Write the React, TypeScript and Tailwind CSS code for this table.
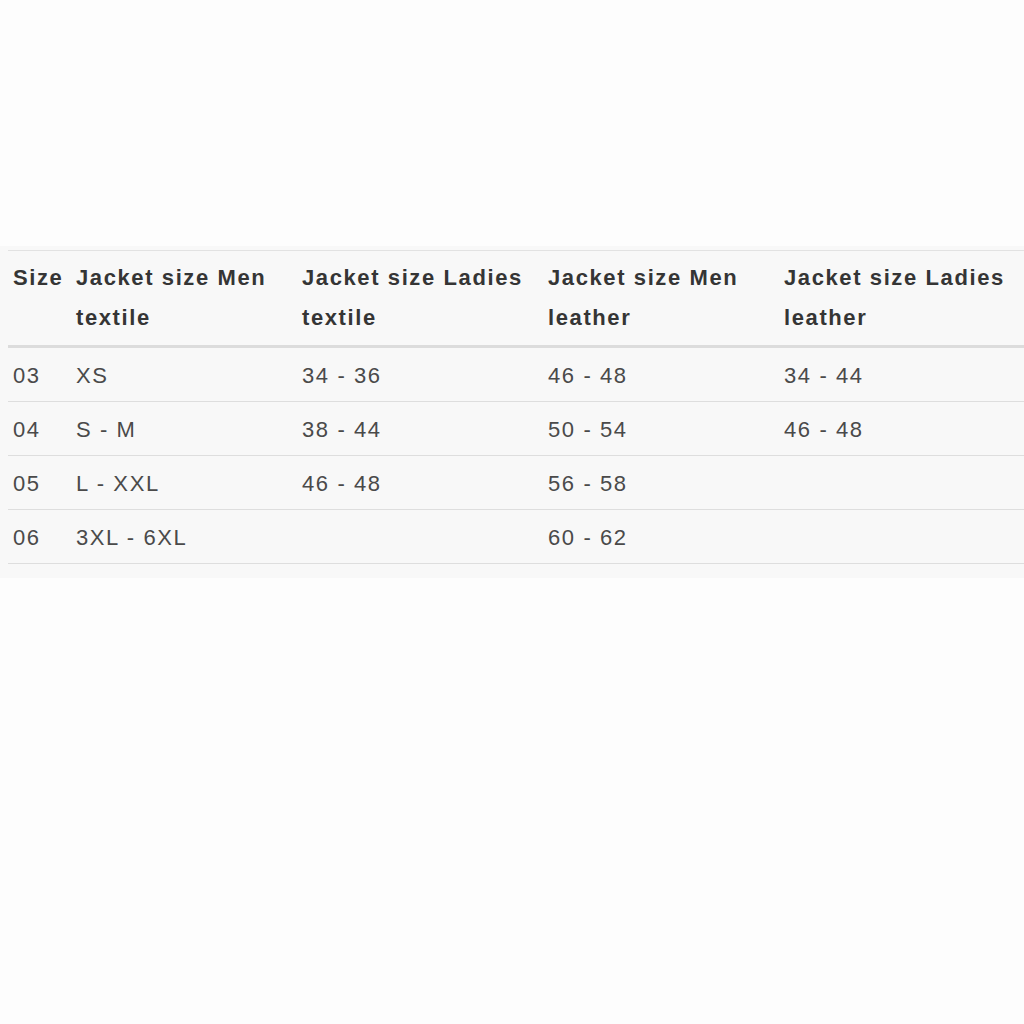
const headers = [
  ["Size", ""],
  ["Jacket size Men", "textile"],
  ["Jacket size Ladies", "textile"],
  ["Jacket size Men", "leather"],
  ["Jacket size Ladies", "leather"],
];

const rows = [
  ["03", "XS", "34 - 36", "46 - 48", "34 - 44"],
  ["04", "S - M", "38 - 44", "50 - 54", "46 - 48"],
  ["05", "L - XXL", "46 - 48", "56 - 58", ""],
  ["06", "3XL - 6XL", "", "60 - 62", ""],
];

function App() {
  return (
    <div className="w-[1024px] h-[1024px] bg-[#fdfdfd] overflow-hidden font-['Liberation_Sans',Arial,sans-serif] tracking-[1.6px]">
      <div className="h-[246px]" />
      {/* Size chart */}
      <div className="bg-[#f8f8f8] pl-[8px] pt-[4px] pb-[14px]">
        <table className="table-fixed border-collapse w-[1040px]">
          <colgroup>
            <col className="w-[63px]" />
            <col className="w-[226px]" />
            <col className="w-[246px]" />
            <col className="w-[236px]" />
            <col className="w-[269px]" />
          </colgroup>
          <thead>
            <tr className="border-t border-[#e2e2e2] border-b-[3px] border-b-[#dcdcdc]">
              {headers.map(([a, b], i) => (
                <th
                  key={i}
                  className="text-left align-top pl-[5px] pt-[7px] pb-[7px] text-[22px] leading-[40px] font-bold text-[#353535]"
                >
                  <div className="whitespace-nowrap">{a}</div>
                  <div className="whitespace-nowrap h-[40px]">{b}</div>
                </th>
              ))}
            </tr>
          </thead>
          <tbody>
            {rows.map((r, i) => (
              <tr key={i} className="border-b border-[#dedede]">
                {r.map((c, j) => (
                  <td
                    key={j}
                    className="pl-[5px] pt-[9px] pb-[6px] text-[22px] leading-[38px] text-[#4a4a4a] whitespace-nowrap"
                  >
                    {c}
                  </td>
                ))}
              </tr>
            ))}
          </tbody>
        </table>
      </div>
    </div>
  );
}

export default App;
